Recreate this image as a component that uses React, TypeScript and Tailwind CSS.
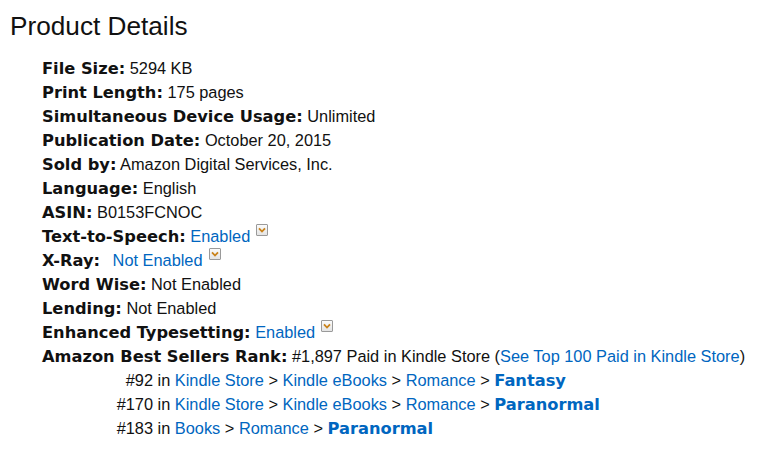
import React from 'react'

const label = "font-['DejaVu_Sans',Verdana,sans-serif] font-bold text-[16.25px] text-[#111]"
const link = 'text-[#0066c0]'

const Pop = () => (
  <span className="inline-flex items-center justify-center w-[12px] h-[12px] ml-[6px] align-top border border-[#9a9a9a] rounded-[1px] bg-gradient-to-b from-[#fbfbfb] to-[#e4e4e4]">
    <svg width="8" height="6" viewBox="0 0 8 6">
      <path d="M1 1.3 L4 4.5 L7 1.3" fill="none" stroke="#c9821a" strokeWidth="1.8" />
    </svg>
  </span>
)

const Row = ({ name, children }: { name: string; children: React.ReactNode }) => (
  <li className="h-[24px] leading-[24px] whitespace-nowrap">
    <b className={label}>{name}</b> {children}
  </li>
)

const Rank = ({ rank, children }: { rank: string; children: React.ReactNode }) => (
  <li className="h-[24px] leading-[24px] whitespace-nowrap flex">
    <span className="w-[80px] ml-[31px] text-right">{rank}</span>
    <span>&nbsp;in {children}</span>
  </li>
)

const Sep = () => <span> &gt; </span>

const boldLink = `${link} font-['DejaVu_Sans',Verdana,sans-serif] font-bold text-[16.25px]`

export default function App() {
  return (
    <div className="w-[774px] h-[450px] bg-white font-['Liberation_Sans',Arial,sans-serif] text-[16.35px] text-[#111] pl-[10px] pt-[10px]">
      <h2 className="text-[26.2px] leading-[32px] text-[#111]">Product Details</h2>
      <ul className="mt-[14px] pl-[32px]">
        <Row name="File Size:">5294 KB</Row>
        <Row name="Print Length:">175 pages</Row>
        <Row name="Simultaneous Device Usage:">Unlimited</Row>
        <Row name="Publication Date:">October 20, 2015</Row>
        <Row name="Sold by:">Amazon Digital Services, Inc.</Row>
        <Row name="Language:">English</Row>
        <Row name="ASIN:">B0153FCNOC</Row>
        <Row name="Text-to-Speech:">
          <span className={link}>Enabled</span>
          <Pop />
        </Row>
        <Row name="X-Ray:">
          <span className={`${link} ml-[8px]`}>Not Enabled</span>
          <Pop />
        </Row>
        <Row name="Word Wise:">Not Enabled</Row>
        <Row name="Lending:">Not Enabled</Row>
        <Row name="Enhanced Typesetting:">
          <span className={link}>Enabled</span>
          <Pop />
        </Row>
        <Row name="Amazon Best Sellers Rank:">
          #1,897 Paid in Kindle Store (<span className={link}>See Top 100 Paid in Kindle Store</span>)
        </Row>
        <Rank rank="#92">
          <span className={link}>Kindle Store</span><Sep /><span className={link}>Kindle eBooks</span><Sep />
          <span className={link}>Romance</span><Sep />
          <b className={boldLink}>Fantasy</b>
        </Rank>
        <Rank rank="#170">
          <span className={link}>Kindle Store</span><Sep /><span className={link}>Kindle eBooks</span><Sep />
          <span className={link}>Romance</span><Sep />
          <b className={boldLink}>Paranormal</b>
        </Rank>
        <Rank rank="#183">
          <span className={link}>Books</span><Sep />
          <span className={link}>Romance</span><Sep />
          <b className={boldLink}>Paranormal</b>
        </Rank>
      </ul>
    </div>
  )
}
